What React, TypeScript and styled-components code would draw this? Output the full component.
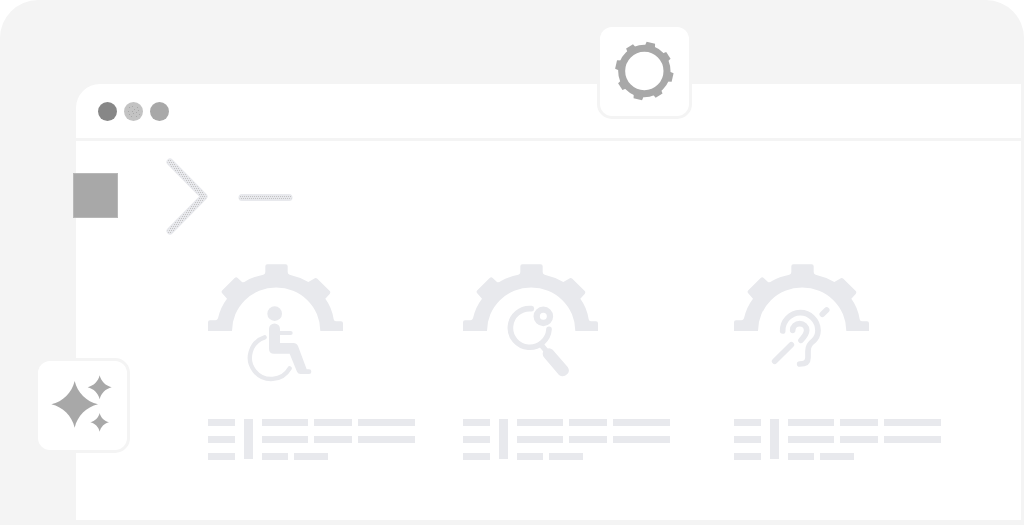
import React from "react";
import styled, { createGlobalStyle } from "styled-components";

const color = {
  panel: "#f4f4f4",
  shape: "#e8e9ed",
  mid: "#a8a8a8",
  dark: "#878787",
  light: "#c3c3c3",
};

const GlobalStyle = createGlobalStyle`
  * { box-sizing: border-box; }
  body { margin: 0; background: #fff; font-family: "Liberation Sans", sans-serif; }
`;

const Stage = styled.main`
  position: relative;
  display: flex;
  min-height: 100vh;
  padding: 84px 3px 5px 76px;
  border-radius: 38px 38px 0 0;
  background: ${color.panel};
`;

const Window = styled.section`
  flex: 1;
  min-width: 0;
  border-radius: 24px 0 0 0;
  background: #fff;
`;

const TitleBar = styled.header`
  display: flex;
  align-items: center;
  gap: 7px;
  height: 57px;
  padding-left: 22px;
  border-bottom: 3px solid ${color.panel};
`;

const Dot = styled.svg`
  display: block;
  width: 19px;
  height: 19px;
`;

const Prompt = styled.div`
  display: flex;
  align-items: center;
  gap: 48px;
  padding-top: 17px;
`;

const Square = styled.div`
  width: 45px;
  height: 45px;
  margin-left: -3px;
  background: ${color.mid};
  border: 1px solid #b8b8b8;
`;

const PromptMark = styled.svg`
  display: block;
  width: 127px;
  height: 75px;
  overflow: visible;
`;

const Cards = styled.div`
  display: grid;
  grid-template-columns: 255fr 271fr 287fr;
  padding: 31px 0 60px 132px;
`;

const Card = styled.article`
  width: 207px;
`;

const Emblem = styled.svg`
  display: block;
  width: 135px;
  height: 120px;
  margin-bottom: 35px;
  fill: ${color.shape};
  overflow: visible;
`;

const TextBlock = styled.div`
  display: flex;
  gap: 9px;
  height: 41px;
`;

const Lines = styled.div`
  display: flex;
  flex-direction: column;
  justify-content: space-between;
`;

const Line = styled.div`
  display: flex;
  gap: 6px;
`;

const Bar = styled.span<{ $width: number }>`
  width: ${(p) => p.$width}px;
  height: 7px;
  background: ${color.shape};
`;

const Divider = styled.span`
  width: 9px;
  height: 40px;
  background: ${color.shape};
`;

const Tile = styled.div<{ $left: number; $top: number }>`
  position: absolute;
  left: ${(p) => p.$left}px;
  top: ${(p) => p.$top}px;
  width: 95px;
  height: 95px;
  border: 3px solid ${color.panel};
  border-radius: 15px;
  background: #fff;
`;

const TileIcon = styled.svg`
  display: block;
  width: 100%;
  height: 100%;
  fill: ${color.mid};
`;

const stroke = {
  fill: "none",
  stroke: color.shape,
  strokeLinecap: "round" as const,
  strokeLinejoin: "round" as const,
};

const HalfGear = ({ shift = 0 }: { shift?: number }) => (
  <path
    transform={`translate(${shift} 0)`}
    d="M24 228V202Q24 196 30 196H46Q52 196 54 190Q61 157 81 131L66 114Q63 110 67 106L104 69Q109 65 113 69L126 81Q131 83 138 78Q160 65 190 59Q196 57 196 51V34Q196 28 202 28H257Q263 28 263 34V51Q263 57 269 59Q300 66 325 81L342 71Q347 67 352 71L390 109Q392 113 389 117L376 131Q396 158 401 193Q402 199 408 199H423Q429 199 429 205V228H361A132 130 0 0 0 96 228Z"
  />
);

const Wheelchair = () => (
  <>
    <circle cx="224" cy="176" r="22" />
    <path d="M207 222a16.500 16.500 0 0 1 33 0V264H280Q290 264 294 273L320 343H327a7 7 0 0 1 0 14H302Q294 357 291 350L269 296H222Q207 296 207 281Z" />
    <path {...stroke} strokeWidth="12" d="M235 234H272" />
    <path {...stroke} strokeWidth="13" d="M194 247A64 64 0 1 0 269 340" />
  </>
);

const Magnifier = () => (
  <>
    <path {...stroke} strokeWidth="17" d="M229 161A58 58 0 1 0 282 223" />
    <circle {...stroke} strokeWidth="19" cx="265" cy="184" r="20" />
    <path {...stroke} strokeWidth="16" d="M257 268L274 288" />
    <path d="M263 296Q262 288 270 284Q283 275 293 284L338 336Q346 348 337 357Q325 369 312 360L268 308Q263 303 263 296Z" />
  </>
);

const Ear = () => (
  <g {...stroke} strokeWidth="17">
    <path d="M174 228A53 54 0 0 1 280 226Q280 246 265 259Q250 270 250 288V308Q250 327 225 327" />
    <path d="M204 226A21 20 0 0 1 246 226Q246 238 229 256" />
    <path d="M150 319L200 269M293 178L306 165" />
  </g>
);

const Placeholder = () => (
  <TextBlock>
    <Lines>
      <Bar $width={27} />
      <Bar $width={27} />
      <Bar $width={27} />
    </Lines>
    <Divider />
    <Lines>
      {[[46, 38, 57], [46, 38, 57], [26, 34]].map((widths, row) => (
        <Line key={row}>
          {widths.map((w, i) => (
            <Bar key={i} $width={w} />
          ))}
        </Line>
      ))}
    </Lines>
  </TextBlock>
);

// Four-pointed star: each side bows in towards the centre.
const star = (cx: number, cy: number, r: number) => {
  const n = r * 0.12;
  const f = r * 0.5;
  return [
    `M${cx} ${cy - r}`,
    `C${cx + n} ${cy - f} ${cx + f} ${cy - n} ${cx + r} ${cy}`,
    `C${cx + f} ${cy + n} ${cx + n} ${cy + f} ${cx} ${cy + r}`,
    `C${cx - n} ${cy + f} ${cx - f} ${cy + n} ${cx - r} ${cy}`,
    `C${cx - f} ${cy - n} ${cx - n} ${cy - f} ${cx} ${cy - r}Z`,
  ].join("");
};

const chevron = "M170 162L204 196.500L170 231";
const dash = "M242 197.500H289";

export default function App() {
  return (
    <>
      <GlobalStyle />
      <Stage>
        <Window>
          <TitleBar>
            <Dot viewBox="0 0 19 19">
              <circle cx="9.500" cy="9.500" r="9.500" fill={color.dark} />
            </Dot>
            <Dot viewBox="0 0 19 19">
              <circle cx="9.500" cy="9.500" r="9.500" fill={color.light} />
              <path
                fill={color.mid}
                d="M5 5h1v1h-1zM8 4h1v1h-1zM13 5h1v1h-1zM10 7h1v1h-1zM14 8h1v1h-1zM4 9h1v1h-1zM8 9h1v1h-1zM12 10h1v1h-1zM5 12h1v1h-1zM9 11h1v1h-1zM15 12h1v1h-1zM7 14h1v1h-1zM12 14h1v1h-1z"
              />
            </Dot>
            <Dot viewBox="0 0 19 19">
              <circle cx="9.500" cy="9.500" r="9.500" fill={color.mid} />
            </Dot>
          </TitleBar>

          <Prompt>
            <Square />
            <PromptMark viewBox="166 158 127 75">
              <defs>
                <pattern id="grain" width="4" height="4" patternUnits="userSpaceOnUse">
                  <rect width="4" height="4" fill={color.shape} />
                  <path fill={color.light} d="M0 0h1v1h-1zM2 0h1v1h-1zM1 2h1v1h-1zM3 2h1v1h-1z" />
                </pattern>
              </defs>
              <path {...stroke} strokeWidth="7" d={chevron} />
              <path {...stroke} strokeWidth="7" d={dash} />
              <path {...stroke} stroke="url(#grain)" strokeWidth="5" d={chevron} />
              <path {...stroke} stroke="url(#grain)" strokeWidth="5" d={dash} />
            </PromptMark>
          </Prompt>

          <Cards>
            <Card>
              <Emblem viewBox="24 27 405 360">
                <HalfGear />
                <Wheelchair />
              </Emblem>
              <Placeholder />
            </Card>
            <Card>
              <Emblem viewBox="24 27 405 360">
                <HalfGear />
                <Magnifier />
              </Emblem>
              <Placeholder />
            </Card>
            <Card>
              <Emblem viewBox="28 27 405 360">
                <HalfGear shift={4} />
                <Ear />
              </Emblem>
              <Placeholder />
            </Card>
          </Cards>
        </Window>

        <Tile $left={597} $top={24}>
          <TileIcon viewBox="30 36 267 267">
            <circle cx="163" cy="168" r="68" fill="none" stroke={color.mid} strokeWidth="21" />
            {[13, 103, 193, 283].map((angle) => (
              <path key={angle} d="M147 96L150 81H176L179 96Z" transform={`rotate(${angle} 163 168)`} />
            ))}
            {[57, 149, 237, 329].map((angle) => (
              <path key={angle} d="M148 98L151 82H175L178 98Z" transform={`rotate(${angle} 163 168)`} />
            ))}
          </TileIcon>
        </Tile>

        <Tile $left={35} $top={358}>
          <TileIcon viewBox="39 33 267 267">
            <path d={star(149, 163, 70)} />
            <path d={star(224, 112, 36)} />
            <path d={star(224, 217, 28)} />
          </TileIcon>
        </Tile>
      </Stage>
    </>
  );
}
